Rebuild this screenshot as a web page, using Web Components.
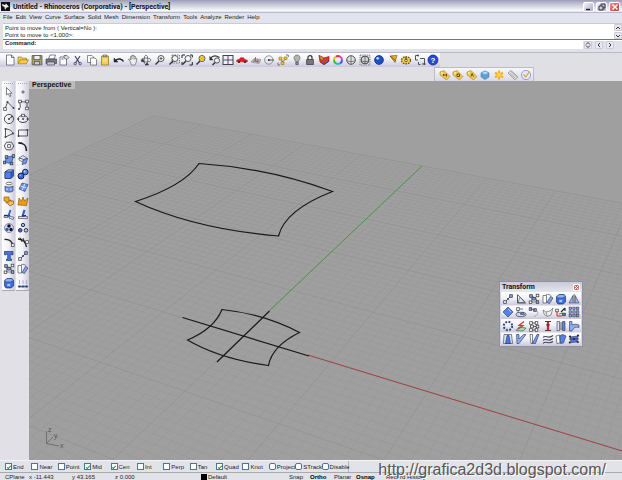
<!DOCTYPE html>
<html lang="en">
<head>
<meta charset="utf-8">
<title>Untitled - Rhinoceros (Corporativa) - [Perspective]</title>
<style>
  html, body { height: 100%; margin: 0; }
  body { font: 6px/8px "Liberation Sans", Arial, sans-serif; color: #222; overflow: hidden; }
</style>
</head>
<body>
<rhino-app></rhino-app>

<script>
// small helpers for the icon drawings, all icons live on a 12x12 canvas
const line = (d, c = '#444', w = .9) => `<path d="${d}" fill="none" stroke="${c}" stroke-width="${w}"/>`;
const fill = (d, c = '#6a94ea', s = '#334') => `<path d="${d}" fill="${c}" stroke="${s}" stroke-width=".6" stroke-linejoin="round"/>`;
const node = (x, y, c = '#fff') => `<rect x="${x - 1.3}" y="${y - 1.3}" width="2.6" height="2.6" fill="${c}" stroke="#333" stroke-width=".7"/>`;
const dot = (x, y, c = '#444', r = 1) => `<circle cx="${x}" cy="${y}" r="${r}" fill="${c}"/>`;
const ring = (x, y, r, c = '#444', f = 'none', w = .9) => `<circle cx="${x}" cy="${y}" r="${r}" fill="${f}" stroke="${c}" stroke-width="${w}"/>`;
const lens = ring(7, 4.5, 3, '#444', '#f4f4fa') + line('M5 7L1.5 10.5', '#333', 1.5);
const tag = (mark) => fill('M1 3L5 1.5 11 7.5 7.5 11 1 6Z', '#eec64e', '#a98430') + dot(3, 4, '#fff', .8) + line(mark, '#5b4310');
const cube = fill('M2 4L5 2H10.5V8L8 10.5H2Z', '#2f63d8', '#123') + fill('M2 4L5 2H10.5L8 4Z', '#a9c6ff', '#235') + fill('M2 4H8V10.5H2Z', '#4f7ff0', '#235');

const icons = {
  new: fill('M2.5 1H7.5L10 3.5V11H2.5Z', '#fff') + line('M7.5 1V3.5H10', '#444', .7),
  open: fill('M1 9.5V3H4.5L5.5 4.2H9.5V6', '#f3d060', '#8c6510') + fill('M1 9.8L3.3 5.8H11.5L9.3 9.8Z', '#ffcc35', '#8c6510'),
  save: fill('M1 1.5H11V10.8H1Z', '#a9a06b', '#3c3c3c') + fill('M3 1.5H9V5.5H3Z', '#eef') + fill('M3.5 7.5H8.5V10.8H3.5Z', '#ccd'),
  print: fill('M3.5 5L5 1H10.5L9 5Z', '#fff') + fill('M1 5H11.5V9.5H1Z', '#777a80') + fill('M2 8H9.5V11H2Z', '#c9ccd4'),
  props: fill('M2 3H8.5V11H2Z', '#fff') + fill('M6 1.5H9L11 3.5 9 5.5 6 4Z', '#d8d8de') + line('M3.5 5H5.5'),
  cut: line('M3 2L7.5 9M8 2L3.5 9', '#3a3f55', 1.1) + ring(3.2, 9.6, 1.2, '#3a4a80') + ring(8.2, 9.6, 1.2, '#3a4a80'),
  copy: fill('M1.5 1.5H6L7.5 3V8.5H1.5Z', '#fff', '#444') + fill('M4.5 4H9L10.5 5.5V11H4.5Z', '#fff', '#444'),
  paste: fill('M2.5 2H9.5V11H2.5Z', '#f0cf50', '#75601c') + fill('M4.3 1H7.7V2.8H4.3Z', '#ddd') + line('M4 5H8M4 7H8', '#fff3b0', .8),
  undo: line('M2.5 6.5C5 4 9 4.5 10.5 7.5', '#222', 1.5) + fill('M1 4V8H5Z', '#222'),
  pan: fill('M3 7L1.3 5.5 2.4 5 3.5 6V2.5H4.7V1.3H6V1.6H7.3V2.6H8.6V5L10 4.5 9.3 8 8 11H4.5Z', '#eee', '#555') + line('M4.7 2.5V5.5M6 2V5.5M7.3 2.6V5.5', '#666', .5),
  orbit: `<ellipse cx="6" cy="6" rx="5" ry="2" fill="none" stroke="#666" stroke-width=".8"/><ellipse cx="6" cy="6" rx="1.8" ry="5" fill="none" stroke="#666" stroke-width=".8"/>` + fill('M3 5L1 7 4 8ZM7 9L5 11 8.5 11Z', '#333'),
  zoom: lens + line('M7 3V6M5.5 4.5H8.5', '#333', .7),
  zoomwin: '<rect x="4" y="1" width="7.5" height="8" fill="none" stroke="#444" stroke-width=".7" stroke-dasharray="1.5 1"/>' + lens,
  zoomext: lens + line('M1 4V1H4M9 1H11.3V3.5M11.3 8V11H8.5M1 8V11', '#222', 1),
  zoomsel: lens + dot(7, 4.5, '#f2c400', 2.2),
  undoview: ring(8, 6.5, 2.6, '#444', '#eee') + line('M6 8.5L3.5 11', '#333', 1.4) + line('M1.5 4.5C4 1 8 2 10.5 3.5', '#333', 1.2) + fill('M.8 2.5V6H4Z', '#333'),
  views: '<rect x="1" y="1.5" width="10" height="9" fill="#eef" stroke="#444"/>' + line('M6 1.5V10.5M1 6H11', '#444'),
  car: fill('M.8 7.8V6L3 5.5 4.5 3.8H7.5L8.8 5.6 11.3 6.2V7.8Z', '#e02020', '#b01010') + dot(3, 8, '#222', 1.1) + dot(9, 8, '#222', 1.1),
  cplane: fill('M1 8L4 4.5 11 5.5 9 9.5Z', '#b9bcc0', '#888') + line('M3 7L9.5 8M5 5L3.5 8.5M8 5L7 9', '#777', .6) + line('M5.5 7L5.5 3M5.5 7L9 7.2', '#b44', .8),
  objsnap: ring(5.8, 6, 4.2, '#888') + line('M5.8 6H11', '#444') + dot(5.8, 6, '#333', 1),
  points: fill('M2 3.2H5V6H2ZM7 3H10V5.5H7Z', '#f4c52a', '#94700a') + fill('M4 8H7V10.5H4Z', '#f4c52a', '#94700a') + line('M9 1H11.3V3M1 8.5V11H3M4.5 6L5.5 8 8 5.5', '#555', .8),
  bulb: fill('M6 1C3.4 1 2.7 3.2 3.2 4.7L4.8 7.8H7.2L8.8 4.7C9.3 3.2 8.6 1 6 1Z', '#b4b4b4', '#555') + fill('M4.8 8.3H7.2V10.6H4.8Z', '#999'),
  lock: line('M4 5.5V3.5C4 1 8 1 8 3.5V5.5', '#333', 1.2) + fill('M2.6 5.5H9.4V10.5H2.6Z', '#777', '#222'),
  layer: fill('M1 1.5L6 4 11 2.5V7L6 10.8 2 8Z', '#d93b25', '#611') + fill('M1 1.5L4.5 3 6 6.5 2.6 5.5Z', '#f58c2c', '#842') + line('M3 8.2L6.5 10.2 11 7', '#2950b8', 1.1),
  colour: [['#e53030', 0], ['#ec39d0', 60], ['#4a55e8', 120], ['#24c3c3', 180], ['#3bbd38', 240], ['#efb820', 300]].map(([c, a]) => `<path d="M6 2A4 4 0 0 1 9.46 4" fill="none" stroke="${c}" stroke-width="2" transform="rotate(${a - 30} 6 6)"/>`).join(''),
  wire: ring(6, 6, 4.3, '#444', '#dfdfe4') + line('M6 1.7V10.3M1.7 6.5C4 8 8 8 10.3 6.5', '#666', .8),
  wiresel: '<rect x="1" y="1" width="10" height="10" fill="#ddd" stroke="#555" stroke-width=".7" stroke-dasharray="1.3 1"/>' + ring(6, 6, 3.9, '#333', '#d7d7dc') + line('M6 2V10M2 6.5C4 8 8 8 10 6.5', '#555', .8),
  ball: ring(6, 6, 4.4, '#12286e', '#1c50c8', .8) + dot(4.7, 4.3, '#bcd6ff', 1.4),
  spot: fill('M4 2L11 1.3 9 8.5Z', '#e8ab2b', '#77550c') + line('M4 2L10 7', '#5a4a20', .8),
  gear: '<ellipse cx="6" cy="6.3" rx="4.4" ry="3.4" fill="#f1ce42" stroke="#6d5a18" stroke-width="1.6" stroke-dasharray="1.6 .9"/>' + '<ellipse cx="6" cy="6.3" rx="3.6" ry="2.7" fill="#f1ce42"/>' + ring(6, 6.3, 1.3, '#5d4b10', '#fff') + line('M6 3V6', '#333'),
  dims: line('M4 1.5H1.5V6H4M6 4.5H10.5V10H8M4.5 8V10.5H6.5', '#555', 1) + dot(4, 1.5) + dot(10.5, 10),
  help: ring(6, 6, 5, '#14278f', '#2748d8', .8) + '<text x="6" y="9" text-anchor="middle" font-size="8" font-weight="700" fill="#fff">?</text>',

  tagM: tag('M4.5 7V5L6 6.5 7.5 5V7.5'), tagO: tag('M5 5H7.5V7.5H5Z'), tagA: tag('M5 7.5L6 4.5 7.5 7.5'),
  box3: fill('M2 4L6 2 10 4V8L6 10.5 2 8Z', '#5f9fd2', '#4a7fae') + fill('M2 4L6 2 10 4 6 5.8Z', '#b8dcf5', '#5a94bd'),
  star: line('M6 1.5V10.5M2 3.7L10 8.3M10 3.7L2 8.3', '#efb12a', 2.2) + dot(6, 6, '#ffd14b', 2),
  tape: fill('M1 4L4 1.5 11 8 8 10.8Z', '#ddd', '#777') + line('M3 4.5L8 9M4.5 3L9.5 7.7', '#999', .7),
  okc: ring(6, 6, 4.6, '#8c94d8', '#e6e8fa') + line('M3.5 5.5L5.7 8 9.5 2.5', '#d8ac30', 1.3),

  select: fill('M3.5 1.5V9L5.3 7.5 6.7 10.6 8 10 6.7 7.2H9Z', '#fff', '#333'),
  point: ring(6, 6, 1.1, '#333', '#fff', .8),
  polyline: line('M2 10L4.5 3 8 6.5 10.5 9') + node(2, 10) + dot(4.5, 3) + dot(10.5, 9),
  curve: line('M2 10C5 8 2 4 3 3S9 4 10 2V9', '#444') + node(3, 2.5) + node(10, 2.5) + node(10, 9.5) + dot(2, 10),
  circle: ring(6, 6, 4.6) + line('M6 6L9 3.5', '#333', .8) + dot(6, 6) + dot(9, 3.5),
  ellipse: '<ellipse cx="6" cy="6" rx="5" ry="3.5" fill="none" stroke="#444"/>' + node(6, 2.5) + dot(6, 6) + dot(1.4, 6) + dot(10.6, 6),
  arc: line('M2.5 2V10L10 6.5C9.5 4 6 2 2.5 2') + dot(2.5, 2) + dot(2.5, 10) + dot(10, 6.5),
  rect: line('M1.5 3H10.5V9H1.5Z') + dot(1.5, 9) + dot(10.5, 3),
  polygon: line('M3.5 2.2H8.5L10.8 6 8.5 9.8H3.5L1.2 6Z') + node(6, 6),
  fillet: line('M1.5 3C7 3 9.5 5 9.5 11', '#222', 1.6) + line('M1.5 3H5', '#222', 1.2),
  surface: fill('M3.5 3L10.5 2 8.5 9.5 1.5 8.5Z') + node(3.5, 3, '#7fa2ee') + node(10.5, 2, '#7fa2ee') + node(8.5, 9.5, '#7fa2ee') + node(1.5, 8.5, '#7fa2ee'),
  blend: fill('M2 4L6 1.5 10.5 4.5 6.5 5.5Z', '#dce6ff') + fill('M6.5 5.5L10.5 4.5 9 9.5 5 10.5Z') + fill('M2 4L6.500 5.500 5 7.500 2 6Z', '#fff'),
  cube,
  spheres: ring(4, 8, 3, '#113', '#3c6be2') + ring(8.3, 4, 2.8, '#113', '#5c8bf2') + dot(7.5, 3.4, '#c4d8ff', .8) + dot(3.2, 7.2, '#a9c6ff', .8),
  cylinder: fill('M2 5V10C4 11.5 8 11.5 10 10V5C8 6.500 4 6.500 2 5Z') + '<ellipse cx="6" cy="2.5" rx="3" ry="1.3" fill="#fff" stroke="#444" stroke-width=".7"/>' + line('M4 7V9.5M8 7V9.5', '#cfe0ff', .9),
  mesh: fill('M2 8L5 2 11 3.5 8 10.5Z') + line('M3.5 5L9.5 7M8 2.7L5 9.3', '#dfe8ff', .9),
  join: fill('M1 2H6V5H8V8H3V6H1Z', '#f3ad22', '#7b4b00') + fill('M5 6H10.5V9L7 11 5 9Z', '#f7c05a', '#6b4400'),
  explode: fill('M1 10L2 3 4.5 6.5 6 2 7.5 6 11 3 9.5 10.5Z', '#f39a16', '#7b4b00'),
  trim: line('M1 6.5H7', '#225', 1.3) + fill('M7 7L11 8.500 10 10.500 6 9ZM1 7H5V8.5H1Z', '#dde4f8') + line('M7.500 1L5 8', '#2b5fd0', 1.8),
  split: fill('M1.5 7.500H10.5V9.5H1.5Z', '#dde4f8') + line('M7.500 1L5.500 7.500', '#2b5fd0', 2.2) + line('M5 7L9 6.500', '#223', 1),
  group: ring(6, 6, 4.5, '#667', '#d9ddf0', .7) + dot(6, 4, '#113', 1.8) + dot(4, 7.5, '#2b5fd0', 1.7) + dot(8, 7.5, '#113', 1.7),
  ungroup: ring(6, 3, 1.7, '#224', '#9db4f0') + ring(3.2, 8.3, 1.8, '#224', '#3c6be2') + ring(9, 8.3, 1.8, '#224', '#ccc'),
  extend: line('M1.5 3.5C6 3 9 5 10 10', '#222', 1.3) + node(9.8, 9),
  offset: line('M1 3C6 3 8.5 5 9.5 11', '#222', 1.3) + line('M3 1.5L5 6M6 2L8 7', '#222', .9) + node(10, 6),
  text: '<path d="M1.5 1.5H10V4.8H8.500V3.800H7.300V9H8.500V10.500H3.500V9H4.700V3.800H3.200V4.800H1.500Z" fill="#4a7ae8" stroke="#124" stroke-width=".6"/>',
  move: line('M3 9L9 3', '#444', .9) + node(3, 9, '#dfe6fb') + node(9, 3, '#7fa2ee') + dot(6, 6),
  array: line('M3 3L8 5 9 9 4 9Z', '#556', .7) + node(3, 3, '#7fa2ee') + node(9.5, 2.5) + node(6, 5.7, '#7fa2ee') + node(9.5, 9, '#7fa2ee') + node(2.500, 9.3),
  rotate: fill('M1 2.5H4.5V10H1Z', '#fff') + fill('M5 9.5L8.5 3.5 11 5 7.5 10.5Z', '#7fa2ee') + line('M4 1.5C6 1 8 1.5 9.5 3', '#555', .7),
  solid: fill('M1.500 4L4 1.500H9L10.500 3.500V9L8 11H3L1.500 9Z', '#3a6de0', '#124') + fill('M1.500 4L4 1.500H9L10.500 3.500 7.500 5H3Z', '#8fb0f6', '#246') + fill('M4 6.500H7.500V9.500H4Z', '#a9c6ff', '#3a6de0'),
  ground: line('M1 9.5H11', '#2b5fd0', 1.6) + line('M2.5 3V7M6 3V7M9.5 3V7', '#9ab', .8) + dot(2.5, 9.5) + dot(6, 9.5) + dot(9.5, 9.5),

  rotate2: fill('M3 9.5L5 4 9.5 9.5Z', '#dfe6f5', '#555') + line('M2.5 1.5V10H11', '#444', .9) + line('M3 2L10 9', '#555', .8),
  mirror: fill('M5 2.5V10H1ZM7.2 2.5V10H11Z', '#9db9f5') + line('M6.1 1V11', '#444', .7),
  rotate3: fill('M6 1L11 6 6 11 1 6Z', '#4f82ea') + line('M6 3L9 6', '#a9c6ff', 1),
  project: '<ellipse cx="6" cy="8.5" rx="5" ry="2.2" fill="#cdd9f4" stroke="#334" stroke-width=".7"/>' + node(3, 3) + line('M3 4V7M5 3H8', '#555', .8) + fill('M5 8L8 6 9.5 9Z'),
  orient: node(2.5, 3, '#7fa2ee') + node(7, 4, '#7fa2ee') + line('M9 5C11 7 9 10 6 10.5', '#999', .8) + line('M3 3L7 4', '#445', .8),
  orient2: fill('M1 4L4 6 8 5 11 2 9 9 5 10.5 2 8Z', '#eee', '#555') + line('M4 6L5 10', '#777', .7),
  cplane2: line('M2 5V10H7', '#c22', 1) + line('M6 6L10 2M10 2V5', '#223', 1.1) + line('M4 8L8 7', '#2a4', 1) + node(9, 8.5, '#4477e2') + node(2, 4.5),
  grid: [2.3, 6, 9.7].map(y => [2.3, 6, 9.7].map(x => `<rect x="${x - 1.2}" y="${y - 1.2}" width="2.4" height="2.4" fill="#8aa8ea" stroke="#334" stroke-width=".6"/>`).join('')).join(''),
  polar: '<circle cx="6" cy="6" r="4.2" fill="none" stroke="#2f4a8c" stroke-width="2" stroke-dasharray="1.9 1.4"/>',
  arraysrf: fill('M1 10.5L4 7 11 8 8 11Z', '#a9d8a9', '#355') + line('M9 1.5L4 5.5H8L3 9', '#c33', 1.2),
  flow: line('M2 3H10M2 6.5H10M2 10H10', '#334', .8) + node(3, 3) + node(8.5, 3) + node(4, 6.5) + node(9.5, 6.5) + node(3, 10) + node(8.5, 10),
  scale1: line('M6 1.5V10.5', '#c22', 2.2) + line('M3 1.5H9M3 10.5H9M4 5H8', '#444', 1),
  scale2: fill('M2 1.5H4.5V10.5H2Z', '#dfe6fb') + fill('M7.5 1.5H10V10.5H7.5Z', '#5a86e0') + line('M6 2V10', '#333', .8),
  bend: fill('M1.5 1.5H4V5C6 4 9 4 11 5V7.5C7 6.5 5.5 8 4 11H1.5Z', '#8aacf2'),
  taper: fill('M2 1.5H9.5L10.5 10.5H1.5Z', '#dce6ff') + fill('M5 2.5H7L8.5 10.5H3.5Z', '#4477e2'),
  twist: fill('M1.500 1.500H4V6L8.500 1.500H11L4 10.500H2Z', '#8aacf2'),
  shear: fill('M2 1.5H4.5V10.5H3Z', '#fff') + fill('M9 1.5H11L7.5 10.5H4.5Z', '#6e99f5'),
  smooth: line('M1 4.5C4 1 6 7 11 2.5M1 7.5C4 4 6 10 11 5.5M1 10.5C4 7 6 12 11 8.5', '#445', 1.1),
  stretch: fill('M1 3L4.5 2 5 10 2 10.5Z', '#fff') + fill('M5 2.500L8 1.500 11 3 8.500 10 5.500 10.500Z', '#4f82ea'),
  cage: fill('M2 4L10 3 9 9 3 9.5Z', '#4a7ae4') + [[2, 3.5], [10, 2.5], [1.8, 9.5], [9.8, 9], [6, 6]].map(p => dot(...p, '#223', 1.1)).join('') + line('M1 6H11', '#334', .8)
};

function define(name, css, html, ready) {
  customElements.define(name, class extends HTMLElement {
    constructor() {
      super();
      this.attachShadow({ mode: 'open' });
    }
    connectedCallback() {
      this.shadowRoot.innerHTML = `<style>${css}</style>${typeof html === 'function' ? html(this) : html}`;
      if (ready) ready(this.shadowRoot, this);
    }
  });
}

// one icon button
define('tool-button', `
  :host { display: block; }
  button { display: grid; place-items: center; width: 100%; height: 100%; margin: 0; padding: 0; border: 0; background: none; }
  button:hover { background: #c6d0ec; }
  svg { display: block; width: 12px; height: 12px; font-family: "Liberation Sans", sans-serif; }
`, el => `<button type="button" aria-label="${el.getAttribute('icon')}"><svg viewBox="0 0 12 12">${icons[el.getAttribute('icon')]}</svg></button>`);

// grid of icon buttons, columns and rows come from the attributes
define('tool-grid', `
  :host { display: grid; grid-template-columns: repeat(var(--cols), minmax(0, 1fr)); grid-auto-rows: minmax(0, 1fr); }
`, el => {
  el.style.setProperty('--cols', el.getAttribute('cols'));
  return el.getAttribute('icons').split(' ').map(i => `<tool-button icon="${i}"></tool-button>`).join('');
});

define('title-bar', `
  :host { display: flex; align-items: center; gap: 3px; height: 13px; padding: 0 2px 0 1px; box-sizing: border-box;
    background: linear-gradient(#9b9bb8, #b7b7cb 20%, #dcdce8 55%, #fbfbfd 85%, #a3a3bf); }
  h1 { flex: 1; margin: 0; font: bold 7px/12px Roboto, "Liberation Sans", sans-serif; color: #111; white-space: nowrap; }
  svg { width: 9px; height: 9px; }
  div { display: flex; gap: 2px; }
  button { width: 11px; height: 10px; padding: 0; border: 1px solid #fff; border-radius: 2px; display: grid; place-items: center;
    background: linear-gradient(135deg, #f5f5fa, #a9a9c2); }
  button svg { width: 8px; height: 8px; }
  .close { background: linear-gradient(135deg, #f0938a, #c62f2c); }
`, `
  <svg viewBox="0 0 9 9"><rect width="9" height="9" fill="#111"/><path d="M1 2L4 3 5 1.5 8 5 5.5 5.5 4 8 3.5 5 1.5 4Z" fill="#eee"/></svg>
  <h1>Untitled - Rhinoceros (Corporativa) - [Perspective]</h1>
  <div>
    <button type="button" aria-label="Minimize"><svg viewBox="0 0 8 8"><path d="M1 6.5H5" stroke="#223" stroke-width="1.4"/></svg></button>
    <button type="button" aria-label="Restore"><svg viewBox="0 0 8 8"><path d="M3 3V1H7V5H5M1 3H5V7H1Z" fill="none" stroke="#334"/></svg></button>
    <button type="button" class="close" aria-label="Close"><svg viewBox="0 0 8 8"><path d="M1.5 1.5L6.5 6.5M6.5 1.5L1.5 6.5" stroke="#fff" stroke-width="1.4"/></svg></button>
  </div>
`);

define('menu-bar', `
  :host { display: block; background: #e1e4ee; }
  nav { display: flex; gap: 3px; padding: 0 3px; height: 10px; }
  a { color: #222; text-decoration: none; line-height: 8px; }
`, `<nav>${['File', 'Edit', 'View', 'Curve', 'Surface', 'Solid', 'Mesh', 'Dimension', 'Transform', 'Tools', 'Analyze', 'Render', 'Help']
  .map(t => `<a href="#${t.toLowerCase()}">${t}</a>`).join('')}</nav>`);

define('command-area', `
  :host { display: block; padding: 0 0 3px 3px; background: #e1e1ea; border-bottom: 1px solid #b9b9cc; }
  .history { display: flex; justify-content: space-between; background: #fff; border-bottom: 1px solid #777; border-top: 1px solid #ccc; height: 15px; }
  .lines { padding: 1px 0 0 2px; }
  p { margin: 0; line-height: 7px; }
  .line { display: flex; align-items: center; height: 9px; background: #fff; }
  label { font-weight: bold; padding-left: 2px; line-height: 7px; align-self: flex-start; }
  input { flex: 1; min-width: 0; height: 8px; border: 0; padding: 0 2px; font: inherit; outline: 0; background: none; }
  .scroll { display: grid; width: 8px; }
  button { display: grid; place-items: center; border: 1px solid #ccccd8; border-radius: 1px; background: #e8e8f1; padding: 0; width: 8px; height: 7px; }
  .line button { height: 8px; }
  .nav { display: flex; gap: 3px; padding: 0 8px 0 1px; background: #e1e1ea; }
  svg { width: 6px; height: 6px; fill: none; stroke: #333; }
`, `
  <div class="history">
    <div class="lines"><p>Point to move from ( Vertical=No ):</p><p>Point to move to &lt;1.000&gt;:</p></div>
    <div class="scroll">
      <button type="button" aria-label="Scroll up"><svg viewBox="0 0 6 6"><path d="M1 4L3 2 5 4"/></svg></button>
      <button type="button" aria-label="Scroll down"><svg viewBox="0 0 6 6"><path d="M1 2L3 4 5 2"/></svg></button>
    </div>
  </div>
  <div class="line">
    <label for="cmd">Command:</label><input id="cmd" type="text">
    <div class="nav">
      <button type="button" aria-label="Spin"><svg viewBox="0 0 6 6"><path d="M1 2.5L3 .5 5 2.5M1 3.5L3 5.5 5 3.5"/></svg></button>
      <button type="button" aria-label="Left"><svg viewBox="0 0 6 6"><path d="M4 1L2 3 4 5"/></svg></button>
      <button type="button" aria-label="Right"><svg viewBox="0 0 6 6"><path d="M2 1L4 3 2 5"/></svg></button>
    </div>
  </div>
`);

define('main-tools', `
  :host { display: block; background: #e0e0e4; }
  .main { width: 437px; height: 14px; padding-left: 3px; background: linear-gradient(#fff, #f2f2f8 40%, #c9c9dc); }
  .row { display: flex; justify-content: flex-end; padding-right: 88px; }
  .extra { width: 100px; height: 14px; padding-left: 3px; border: 1px solid #bcbcc8; border-bottom: 0; box-sizing: border-box; background: linear-gradient(#f6f6fa, #dadae6); }
`, `
  <tool-grid class="main" cols="32" icons="new open save print props cut copy paste undo pan orbit zoom zoomwin zoomext zoomsel undoview views car cplane objsnap points bulb lock layer colour wire wiresel ball spot gear dims help"></tool-grid>
  <div class="row"><tool-grid class="extra" cols="7" icons="tagM tagO tagA box3 star tape okc"></tool-grid></div>
`);

define('side-tools', `
  :host { display: flex; align-items: flex-start; gap: 1px; padding-left: 2px; width: 27px; background: #e0e0e6; }
  section { width: 13px; padding-top: 4px; background: linear-gradient(90deg, #fff, #f0f0f7 50%, #ccccdd); border-bottom: 1px solid #aaa; }
  section::before { content: ""; display: block; margin: -2px 2px 1px; border-top: 1px dotted #aaa; }
  tool-grid { height: 205px; }
`, `
  <section><tool-grid cols="1" icons="select polyline circle arc polygon surface cube cylinder join trim group extend text array solid"></tool-grid></section>
  <section><tool-grid cols="1" icons="point curve ellipse rect fillet blend spheres mesh explode split ungroup offset move rotate ground"></tool-grid></section>
`);

// Perspective of the construction plane. The plane goes from -25 to 25 in both directions.
const origin = [243, 336];
const vanishX = [-1512, -194];
const vanishY = [801, -194];

function project(u, v) {
  const a = -0.00951 * u;
  const b = 0.01889 * v;
  const w = a + b + 1;
  return [0, 1].map(i => ((vanishX[i] * a + vanishY[i] * b + origin[i]) / w).toFixed(1)).join(' ');
}

function gridPath(major) {
  let d = '';
  for (let i = 0; i <= 100; i++) {
    if ((i % 10 === 0) !== major) continue;
    const k = i / 2 - 25;
    d += `M${project(k, -25)}L${project(k, 25)}M${project(-25, k)}L${project(25, k)}`;
  }
  return d;
}

define('view-port', `
  :host { display: block; position: relative; background: #9f9f9f; overflow: hidden; }
  svg { position: absolute; inset: 0; width: 100%; height: 100%; font-family: "Liberation Sans", sans-serif; }
  h2 { position: absolute; top: 0; left: 0; margin: 0; padding: 0 4px 0 3px; font-size: 7px; line-height: 8px; background: #bcbcbc; color: #111; }
  ::slotted(*) { position: absolute; right: 39px; top: 200px; }
`, `
  <svg viewBox="29 81 593 379" preserveAspectRatio="xMidYMid slice" fill="none">
    <path d="${gridPath(false)}" stroke="#979797" stroke-width=".5"/>
    <path d="${gridPath(true)}" stroke="#909090" stroke-width=".7"/>
    <path d="M269 311L422 166" stroke="#4a984a"/>
    <path d="M308 355L622 451" stroke="#a04444"/>
    <g stroke="#181818" stroke-width="1.2">
      <path d="M199 163.5Q268 168 332.500 191.500Q285 210 278.500 236Q195 229 135.500 201.500Q184 186 199 163.500Z"/>
      <path d="M222 309.500Q264 314 299.500 332.500Q272 346 268.500 365.500Q220 359 187.500 340Q214 329 222 309.500Z"/>
      <path d="M182.500 317.500L309 356M217 362L269.500 311"/>
    </g>
    <path d="M46.500 431V443.500L59 446M46.500 443.500L53 437" stroke="#666" stroke-width=".8"/>
    <g fill="#555" font-size="7"><text x="48" y="432">z</text><text x="54" y="438">y</text><text x="60" y="448">x</text></g>
  </svg>
  <h2>Perspective</h2>
  <slot></slot>
`);

define('tool-palette', `
  :host { display: block; width: 82px; border: 1px solid #8f8fa8; background: #d6d6e2; }
  header { display: flex; align-items: center; justify-content: space-between; height: 10px; padding: 0 2px; background: linear-gradient(#c9c9d8, #e6e6ee); }
  h3 { margin: 0; font: bold 7px/10px Roboto, "Liberation Sans", sans-serif; color: #111; }
  button { width: 7px; height: 7px; padding: 0; border: 1px solid #fff; background: #dc6a60; display: grid; place-items: center; box-sizing: border-box; }
  svg { width: 5px; height: 5px; }
  tool-grid { height: 54px; margin: 0 1px; background: linear-gradient(#fff, #f2f2f8 45%, #c9c9dc) 0 0 / 100% 25%; }
`, `
  <header><h3><slot></slot></h3><button type="button" aria-label="Close"><svg viewBox="0 0 5 5"><path d="M.5 .5L4.500 4.500M4.500 .5L.5 4.500" stroke="#fff"/></svg></button></header>
  <tool-grid cols="6" icons="move rotate2 array rotate solid mirror rotate3 project orient orient2 cplane2 grid polar arraysrf flow scale1 scale2 bend taper twist shear smooth stretch cage"></tool-grid>
`);

const snaps = [['End', 1], ['Near'], ['Point'], ['Mid', 1], ['Cen', 1], ['Int'], ['Perp'], ['Tan'], ['Quad', 1], ['Knot'], ['Project'], ['STrack'], ['Disable']];

define('osnap-bar', `
  :host { display: block; background: #e2e2e9; border-top: 1px solid #f4f4f8; }
  div { display: grid; grid-template-columns: repeat(13, minmax(0, 1fr)); width: 343px; height: 11px; padding-left: 5px; border-right: 1px solid #b5b5c0; }
  label { display: flex; align-items: center; gap: 1px; white-space: nowrap; }
  input { appearance: none; flex: none; width: 7px; height: 7px; margin: 0; border: 1px solid #4d7395; background: #fff; box-sizing: border-box; display: grid; place-items: center; }
  input:checked::before { content: ""; width: 3px; height: 1px; border: solid #1d9c1d; border-width: 0 0 1px 1px; transform: rotate(-45deg); }
  .round { border-radius: 2px; }
`, `<div>${snaps.map(([t, on], i) => `<label><input type="checkbox"${on ? ' checked' : ''}${i > 9 ? ' class="round"' : ''}>${t}</label>`).join('')}</div>`);

define('status-bar', `
  :host { display: block; background: #e2e2e9; border-top: 1px solid #aaa; }
  div { display: grid; grid-template-columns: 24px 43px 43px 86px 88px 21px 24px 22px 30px auto; height: 7px; padding-left: 5px; line-height: 8px; white-space: nowrap; }
  .layer { display: flex; align-items: center; }
  .layer::before { content: ""; width: 6px; height: 6px; margin-right: 1px; background: #000; }
  b { color: #000; }
`, `<div><span>CPlane</span><span>x -11.443</span><span>y 43.165</span><span>z 0.000</span><span class="layer">Default</span>
  <span>Snap</span><b>Ortho</b><span>Planar</span><b>Osnap</b><span>Record History</span></div>`);

define('rhino-app', `
  :host { display: flex; flex-direction: column; height: 100vh; position: relative; background: #e0e0e4; }
  main { flex: 1; display: flex; min-height: 0; }
  view-port { flex: 1; }
  .mark { position: absolute; right: 16px; bottom: 0; font-size: 16px; line-height: 20px; color: #555; text-shadow: 1px 1px 0 #fff; }
`, `
  <title-bar></title-bar>
  <menu-bar></menu-bar>
  <command-area></command-area>
  <main-tools></main-tools>
  <main>
    <side-tools></side-tools>
    <view-port><tool-palette>Transform</tool-palette></view-port>
  </main>
  <osnap-bar></osnap-bar>
  <status-bar></status-bar>
  <span class="mark">http://grafica2d3d.blogspot.com/</span>
`);
</script>
</body>
</html>
